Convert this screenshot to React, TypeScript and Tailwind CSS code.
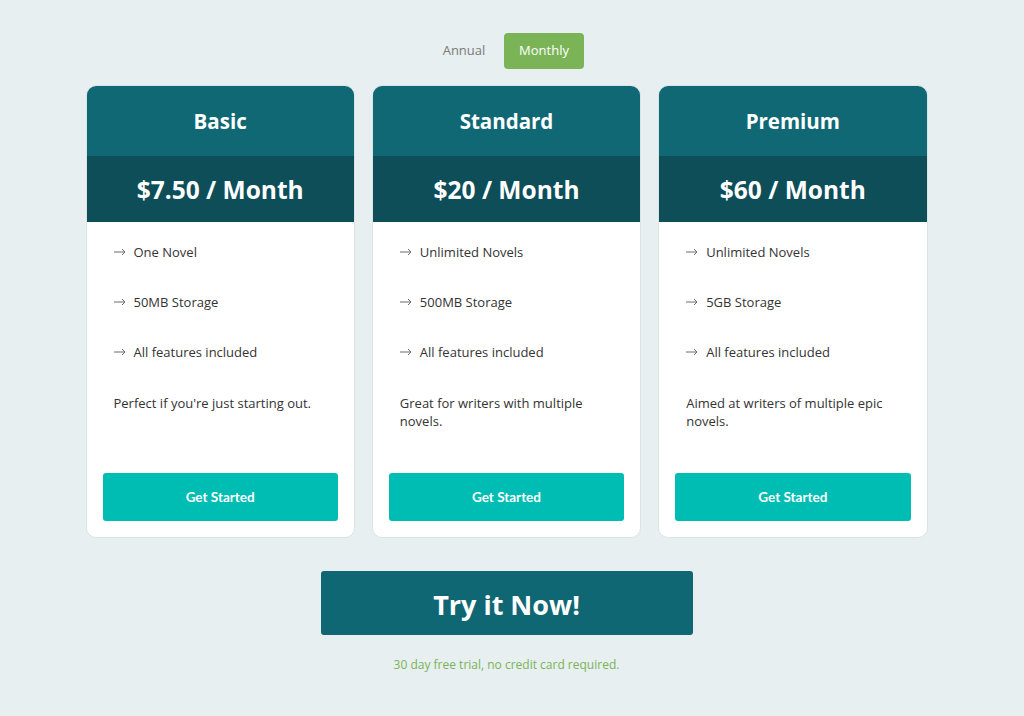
import React, { useState } from 'react';

const plans = [
    {
        name: 'Basic',
        price: '$7.50 / Month',
        features: ['One Novel', '50MB Storage', 'All features included'],
        blurb: "Perfect if you're just starting out.",
    },
    {
        name: 'Standard',
        price: '$20 / Month',
        features: ['Unlimited Novels', '500MB Storage', 'All features included'],
        blurb: 'Great for writers with multiple novels.',
    },
    {
        name: 'Premium',
        price: '$60 / Month',
        features: ['Unlimited Novels', '5GB Storage', 'All features included'],
        blurb: 'Aimed at writers of multiple epic novels.',
    },
];

type Plan = (typeof plans)[number];

const Arrow = () => (
    <svg width="12" height="8" viewBox="0 0 12 8" fill="none" stroke="#6b6b6b" strokeWidth="1" className="mr-[8px] shrink-0">
        <path d="M0 4h11M8 1l3 3-3 3" />
    </svg>
);

const PlanCard: React.FC<{ plan: Plan }> = ({ plan }) => (
    <div className="flex flex-col overflow-hidden rounded-[10px] border border-[#dbe4e5] bg-white">
        <div className="flex h-[70px] items-center justify-center bg-[#106874]">
            <h2 className="text-[20.5px] font-bold text-white">{plan.name}</h2>
        </div>
        <div className="flex h-[66px] items-center justify-center bg-[#0d4e59]">
            <p className="mt-[3px] text-[24.5px] font-bold text-white">{plan.price}</p>
        </div>
        <div className="flex flex-1 flex-col px-[27px] pt-[20px]">
            <ul className="flex flex-col gap-[30px] text-[13px] leading-[20px] text-[#333]">
                {plan.features.map((f) => (
                    <li key={f} className="flex items-center">
                        <Arrow />
                        <span>{f}</span>
                    </li>
                ))}
            </ul>
            <p className="mt-[32px] mb-[43px] text-[13px] leading-[18px] text-[#333]">{plan.blurb}</p>
            <button className="mt-auto -mx-[11px] mb-[16px] h-[48px] rounded-[3px] bg-[#00bdb3] font-['Lato',sans-serif] text-[13.5px] font-bold text-white">
                Get Started
            </button>
        </div>
    </div>
);

export default function App() {
    const [period, setPeriod] = useState<'annual' | 'monthly'>('monthly');

    return (
        <div className="min-h-[716px] bg-[#e7eff0] font-['Open_Sans','Noto_Sans',sans-serif]">
            <div className="flex w-[1013px] flex-col items-center pt-[33px]">
                <div className="mr-[5px] flex">
                    {(['annual', 'monthly'] as const).map((p) => (
                        <button
                            key={p}
                            onClick={() => setPeriod(p)}
                            className={
                                period === p
                                    ? 'h-[36px] w-[80px] rounded-[4px] bg-[#7ab457] text-[13px] text-white'
                                    : 'h-[36px] w-[80px] rounded-[4px] text-[13px] text-[#7a7a7a]'
                            }
                        >
                            {p === 'annual' ? 'Annual' : 'Monthly'}
                        </button>
                    ))}
                </div>

                <div className="mt-[16px] grid w-[842px] grid-cols-3 gap-[17px]">
                    {plans.map((plan) => (
                        <PlanCard key={plan.name} plan={plan} />
                    ))}
                </div>

                <button className="mt-[33px] h-[64px] w-[372px] rounded-[3px] bg-[#0f6774] pt-[4px] text-[27px] font-bold text-white">
                    Try it Now!
                </button>
                <p className="mt-[21px] text-[12px] text-[#7ab457]">30 day free trial, no credit card required.</p>
            </div>
        </div>
    );
}
